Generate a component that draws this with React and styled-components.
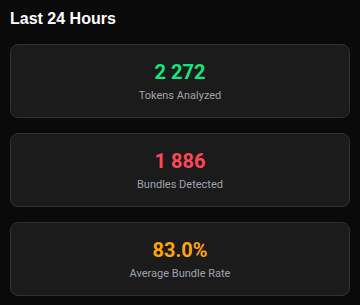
import React from "react";
import styled, { createGlobalStyle } from "styled-components";

const GlobalStyle = createGlobalStyle`
  html, body {
    margin: 0;
    background: #0a0a0a;
  }
`;

const Panel = styled.div`
  padding: 9px 10px 10px 10px;
  display: flex;
  flex-direction: column;
`;

const Titulo = styled.h2`
  margin: 0 0 15px 0;
  font-family: "Liberation Sans", Arial, sans-serif;
  font-weight: 700;
  font-size: 16px;
  line-height: 20px;
  color: #ffffff;
`;

const ListaCards = styled.div`
  display: flex;
  flex-direction: column;
  gap: 15px;
`;

const Card = styled.div`
  height: 74px;
  box-sizing: border-box;
  background: #1b1b1b;
  border: 1px solid #2c303a;
  border-radius: 8px;
  display: flex;
  flex-direction: column;
  align-items: center;
  justify-content: center;
  font-family: Roboto, "Liberation Sans", sans-serif;
`;

const Valor = styled.div`
  font-size: 20px;
  font-weight: 700;
  line-height: 24px;
  color: ${props => props.cor};
`;

const Legenda = styled.div`
  margin-top: 5px;
  font-size: 11px;
  line-height: 14px;
  color: #9ea3ad;
`;

const estatisticas = [
  { valor: "2 272", legenda: "Tokens Analyzed", cor: "#14e67f" },
  { valor: "1 886", legenda: "Bundles Detected", cor: "#ff4757" },
  { valor: "83.0%", legenda: "Average Bundle Rate", cor: "#ffa50a" },
];

export default function App() {
  return (
    <>
      <GlobalStyle />
      <Panel>
        <Titulo>Last 24 Hours</Titulo>
        <ListaCards>
          {estatisticas.map(item => (
            <Card key={item.legenda}>
              <Valor cor={item.cor}>{item.valor}</Valor>
              <Legenda>{item.legenda}</Legenda>
            </Card>
          ))}
        </ListaCards>
      </Panel>
    </>
  );
}
